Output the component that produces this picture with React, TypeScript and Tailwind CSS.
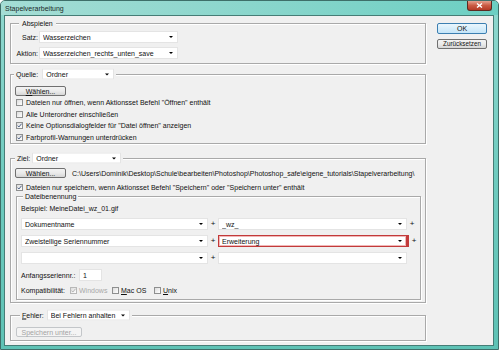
import React from "react"

type Kids = { children?: React.ReactNode; className?: string }

function Dropdown({ value = "", className = "", error = false }: { value?: string; className?: string; error?: boolean }) {
  return (
    <div
      className={`flex items-center bg-white border pl-[3px] pr-[4px] ${
        error ? "border-[#c23a3a] shadow-[inset_0_0_0_1px_#f1b7b7]" : "border-[#e4e4e4]"
      } ${className}`}
    >
      <span className="flex-1 truncate leading-[9px]">{value}</span>
      <span className="w-0 h-0 border-l-[2px] border-r-[2px] border-t-[2px] border-l-transparent border-r-transparent border-t-black" />
    </div>
  )
}

function Check({ checked = false, disabled = false }: { checked?: boolean; disabled?: boolean }) {
  return (
    <span
      className={`flex items-center justify-center w-[7px] h-[7px] shrink-0 border bg-gradient-to-br from-[#dcdcdc] to-white ${
        disabled ? "border-[#b8b8b8]" : "border-[#8e8f8f]"
      }`}
    >
      {checked && (
        <svg width="5" height="5" viewBox="0 0 5 5">
          <path d="M0.5 2.6 L1.9 4 L4.6 0.7" stroke={disabled ? "#b4b4b4" : "#4a5f86"} strokeWidth="1" fill="none" />
        </svg>
      )}
    </span>
  )
}

function Btn({ children, className = "", disabled = false, primary = false }: Kids & { disabled?: boolean; primary?: boolean }) {
  return (
    <div
      className={`flex items-center justify-center rounded-[2px] border ${
        disabled
          ? "border-[#c3c6c9] bg-[#f4f4f4] text-[#a3a3a3]"
          : primary
          ? "border-[#3c7fb1] bg-gradient-to-b from-[#eaf6fd] to-[#c4e5f8]"
          : "border-[#707070] bg-gradient-to-b from-[#f3f3f3] via-[#ebebeb] to-[#d6d6d6]"
      } ${className}`}
    >
      {children}
    </div>
  )
}

function Group({ legend, legendClass, className = "", children }: Kids & { legend: React.ReactNode; legendClass: string }) {
  return (
    <div className={`relative border border-[#a9a9a9] shadow-[inset_1px_1px_0_#fff,1px_1px_0_#fff] ${className}`}>
      <div className={`absolute -top-[1px] -translate-y-1/2 flex items-center bg-[#f0f0f0] px-[2px] ${legendClass}`}>
        {legend}
      </div>
      {children}
    </div>
  )
}

function Plus() {
  return <span className="flex w-[10px] justify-center text-[8px] leading-none">+</span>
}

export default function App() {
  return (
    <div className="w-[499px] h-[350px] flex flex-col overflow-hidden rounded-t-[5px] border border-[#3e6f69] bg-gradient-to-b from-[#8fd8cf] via-[#6fcbbf] to-[#5ec2b5] font-['Liberation_Sans',Arial,sans-serif] text-[7px] leading-none text-[#111]">
      {/* title bar */}
      <div className="flex h-[14px] items-start bg-gradient-to-r from-[#a4ddd5] via-[#8ad6cc] to-[#6ccfc3]">
        <span className="mt-[4px] ml-[4px] text-[#1b2b2a]">Stapelverarbeitung</span>
        <div className="ml-auto mr-[6px] flex h-[10px] w-[25px] items-center justify-center rounded-b-[3px] border border-t-0 border-[#5b2a22] bg-gradient-to-b from-[#e4a08f] via-[#c95a43] to-[#b43a25]">
          <svg width="7" height="5" viewBox="0 0 7 5">
            <path d="M1 0.5 L6 4.5 M6 0.5 L1 4.5" stroke="#fff" strokeWidth="1.4" />
          </svg>
        </div>
      </div>

      {/* body */}
      <div className="ml-[3px] flex h-[331px] w-[490px] border border-[#467d76] bg-[#f0f0f0] pl-[5px]">
        <div className="flex w-[416px] flex-col">
          {/* Abspielen */}
          <Group
            className="mt-[7px] flex flex-col gap-[4px] pt-[7px] pb-[4px] pl-[4px]"
            legendClass="left-[8px] px-[3px]"
            legend={<span>Abspielen</span>}
          >
            <div className="flex h-[12px] items-center gap-[1px]">
              <span className="w-[23px] text-right">Satz:</span>
              <Dropdown value="Wasserzeichen" className="h-[12px] w-[139px]" />
            </div>
            <div className="flex h-[12px] items-center gap-[1px]">
              <span className="w-[23px] text-right">Aktion:</span>
              <Dropdown value="Wasserzeichen_rechts_unten_save" className="h-[12px] w-[139px]" />
            </div>
          </Group>

          {/* Quelle */}
          <Group
            className="mt-[10px] flex flex-col pt-[11px] pl-[4px]"
            legendClass="left-[3px]"
            legend={
              <div className="flex items-center gap-[4px]">
                <span>Quelle:</span>
                <Dropdown value="Ordner" className="h-[11px] w-[72px]" />
              </div>
            }
          >
            <Btn className="h-[10px] w-[51px]">
              <span>
                <span className="underline">W</span>ählen...
              </span>
            </Btn>
            <div className="mt-[1px] flex flex-col pl-[1px]">
              <div className="flex h-[11.5px] items-center gap-[3px]">
                <Check />
                <span>Dateien nur öffnen, wenn Aktionsset Befehl "Öffnen" enthält</span>
              </div>
              <div className="flex h-[11.5px] items-center gap-[3px]">
                <Check />
                <span>Alle Unterordner einschließen</span>
              </div>
              <div className="flex h-[11.5px] items-center gap-[3px]">
                <Check checked />
                <span>Keine Optionsdialogfelder für "Datei öffnen" anzeigen</span>
              </div>
              <div className="flex h-[11.5px] items-center gap-[3px]">
                <Check checked />
                <span>Farbprofil-Warnungen unterdrücken</span>
              </div>
            </div>
          </Group>

          {/* Ziel */}
          <Group
            className="mt-[14px] flex flex-col pt-[9px] pb-[2px] pl-[4px] pr-[4px]"
            legendClass="left-[4px]"
            legend={
              <div className="flex items-center gap-[2px]">
                <span>Ziel:</span>
                <Dropdown value="Ordner" className="h-[11px] w-[89px]" />
              </div>
            }
          >
            <div className="flex h-[10px] items-center gap-[6px]">
              <Btn className="h-[10px] w-[51px] shrink-0">
                <span>Wählen...</span>
              </Btn>
              <span className="whitespace-nowrap">
                C:\Users\Dominik\Desktop\Schule\bearbeiten\Photoshop\Photoshop_safe\eigene_tutorials\Stapelverarbeitung\
              </span>
            </div>
            <div className="mt-[4px] flex h-[10px] items-center gap-[3px] pl-[1px]">
              <Check checked />
              <span className="whitespace-nowrap">Dateien nur speichern, wenn Aktionsset Befehl "Speichern" oder "Speichern unter" enthält</span>
            </div>

            {/* Dateibenennung */}
            <Group
              className="mt-[4px] ml-[1px] flex flex-col pt-[6px] pb-[4px] pl-[4px]"
              legendClass="left-[6px]"
              legend={<span>Dateibenennung</span>}
            >
              <div className="flex h-[10px] items-center">Beispiel: MeineDatei_wz_01.gif</div>
              <div className="mt-[5px] flex h-[12px] items-center">
                <Dropdown value="Dokumentname" className="h-[12px] w-[187px]" />
                <Plus />
                <Dropdown value="_wz_" className="h-[12px] w-[189px]" />
                <Plus />
              </div>
              <div className="mt-[5px] flex h-[12px] items-center">
                <Dropdown value="Zweistellige Seriennummer" className="h-[12px] w-[187px]" />
                <Plus />
                <div className="flex h-[12px] w-[191px] border-r-[2px] border-[#c23a3a]">
                  <Dropdown value="Erweiterung" error className="h-[12px] w-[189px]" />
                </div>
                <Plus />
              </div>
              <div className="mt-[5px] flex h-[12px] items-center">
                <Dropdown className="h-[12px] w-[187px]" />
                <Plus />
                <Dropdown className="h-[12px] w-[189px]" />
              </div>
              <div className="mt-[5px] flex h-[12px] items-center gap-[2px]">
                <span className="w-[56px] whitespace-nowrap">Anfangsseriennr.:</span>
                <div className="flex h-[12px] w-[23px] items-center border border-[#e4e4e4] bg-white pl-[3px]">1</div>
              </div>
              <div className="mt-[4px] flex h-[10px] items-center">
                <span className="w-[49px] whitespace-nowrap">Kompatibilität:</span>
                <Check checked disabled />
                <span className="ml-[2px] w-[33px] text-[#a8a8a8]">Windows</span>
                <Check />
                <span className="ml-[2px] w-[33px]">
                  <span className="underline">M</span>ac OS
                </span>
                <Check />
                <span className="ml-[2px]">
                  <span className="underline">U</span>nix
                </span>
              </div>
            </Group>
          </Group>

          {/* Fehler */}
          <Group
            className="mt-[12px] flex flex-col pt-[11px] pb-[3px] pl-[5px]"
            legendClass="left-[9px]"
            legend={
              <div className="flex items-center gap-[3px]">
                <span>
                  <span className="underline">F</span>ehler:
                </span>
                <Dropdown value="Bei Fehlern anhalten" className="h-[11px] w-[83px]" />
              </div>
            }
          >
            <Btn disabled className="h-[10px] w-[66px]">
              <span>Speichern unter...</span>
            </Btn>
          </Group>
        </div>

        {/* buttons */}
        <div className="ml-[11px] flex w-[50px] flex-col pt-[7px]">
          <Btn primary className="h-[11px]">
            <span>OK</span>
          </Btn>
          <Btn className="mt-[5px] h-[10px]">
            <span className="whitespace-nowrap text-[6.3px]">Zurücksetzen</span>
          </Btn>
        </div>
      </div>
    </div>
  )
}
